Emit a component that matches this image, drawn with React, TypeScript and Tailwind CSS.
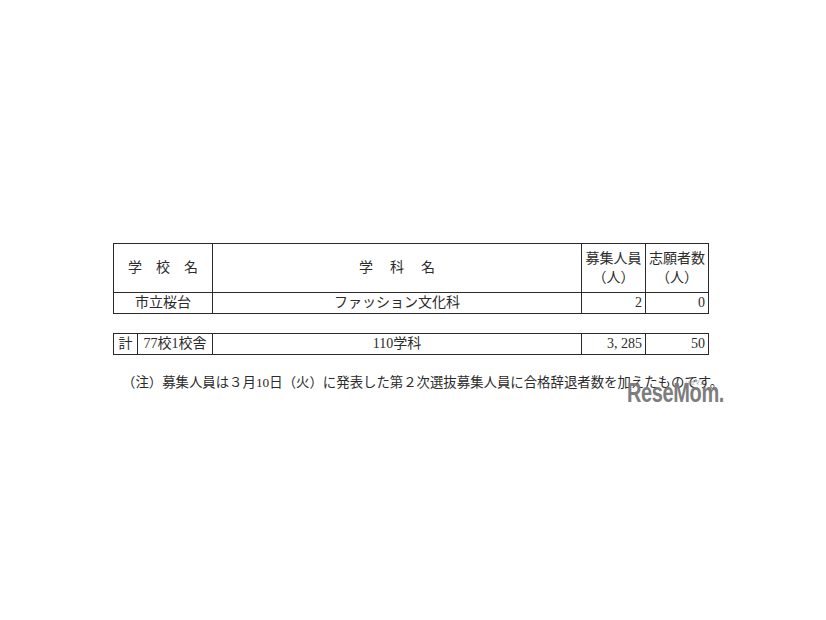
import React from "react";

const F = { fontFamily: '"Liberation Serif", "Noto Sans CJK JP", serif' };

export default function App() {
  const cell = "border border-[#2a2a2a] p-0";
  return (
    <div className="w-[826px] h-[620px] bg-white text-[#2b2b2b] relative overflow-hidden" style={F}>
      <div className="pt-[243px] pl-[113px]">
        <table className="border-collapse border-[1.5px] border-[#2a2a2a] text-[14px] leading-none" style={{ tableLayout: "fixed" }}>
          <colgroup>
            <col style={{ width: 99 }} />
            <col style={{ width: 369 }} />
            <col style={{ width: 64 }} />
            <col style={{ width: 63 }} />
          </colgroup>
          <tbody>
            <tr className="h-[49px]">
              <td className={`${cell} text-center`}>
                <span className="tracking-[14px] pl-[14px]">学校名</span>
              </td>
              <td className={`${cell} text-center`}>
                <span className="tracking-[17px] pl-[17px]">学科名</span>
              </td>
              <td className={`${cell} text-center align-middle`}>
                <div className="leading-[19px]">募集人員</div>
                <div className="leading-[19px]">（人）</div>
              </td>
              <td className={`${cell} text-center align-middle`}>
                <div className="leading-[19px]">志願者数</div>
                <div className="leading-[19px]">（人）</div>
              </td>
            </tr>
            <tr className="h-[21px]">
              <td className={`${cell} text-center`}>市立桜台</td>
              <td className={`${cell} text-center`}>ファッション文化科</td>
              <td className={`${cell} text-right pr-[3px]`}>2</td>
              <td className={`${cell} text-right pr-[3px]`}>0</td>
            </tr>
          </tbody>
        </table>

        <table className="mt-[19px] border-collapse border-[1.5px] border-[#2a2a2a] text-[14px] leading-none" style={{ tableLayout: "fixed" }}>
          <colgroup>
            <col style={{ width: 24 }} />
            <col style={{ width: 75 }} />
            <col style={{ width: 369 }} />
            <col style={{ width: 64 }} />
            <col style={{ width: 63 }} />
          </colgroup>
          <tbody>
            <tr className="h-[21px]">
              <td className={`${cell} text-center`}>計</td>
              <td className={`${cell} text-center`}>77校1校舎</td>
              <td className={`${cell} text-center`}>110学科</td>
              <td className={`${cell} text-right pr-[3px]`}>3, 285</td>
              <td className={`${cell} text-right pr-[3px]`}>50</td>
            </tr>
          </tbody>
        </table>

        <p className="mt-[20px] ml-[9px] text-[13.4px] leading-[16px] whitespace-nowrap">
          （注）募集人員は３月10日（火）に発表した第２次選抜募集人員に合格辞退者数を加えたものです。
        </p>
      </div>

      <div className="absolute left-[627px] top-[380px]">
        <div className="relative">
          <span
            className="block origin-left scale-x-[0.74] text-[27px] font-bold leading-none tracking-[-0.5px] text-[#7d7d7d]"
            style={{ fontFamily: '"Liberation Sans", Arial, sans-serif' }}
          >
            ReseMom.
          </span>
          <span className="absolute left-[58px] top-[-1px] text-[5px] leading-none text-[#8a8a8a]" style={{ fontFamily: '"Noto Sans CJK JP", sans-serif' }}>
            リセマム
          </span>
        </div>
      </div>
    </div>
  );
}
